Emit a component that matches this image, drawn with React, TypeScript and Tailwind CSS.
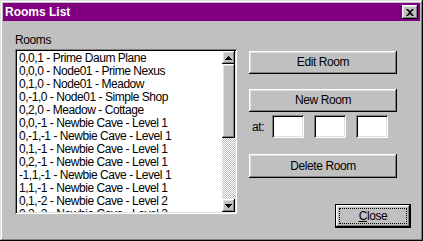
import React from 'react';

const rooms = [
  '0,0,1 - Prime Daum Plane',
  '0,0,0 - Node01 - Prime Nexus',
  '0,1,0 - Node01 - Meadow',
  '0,-1,0 - Node01 - Simple Shop',
  '0,2,0 - Meadow - Cottage',
  '0,0,-1 - Newbie Cave - Level 1',
  '0,-1,-1 - Newbie Cave - Level 1',
  '0,1,-1 - Newbie Cave - Level 1',
  '0,2,-1 - Newbie Cave - Level 1',
  '-1,1,-1 - Newbie Cave - Level 1',
  '1,1,-1 - Newbie Cave - Level 1',
  '0,1,-2 - Newbie Cave - Level 2',
  '0,2,-2 - Newbie Cave - Level 2',
];

const raised =
  'bg-[#c0c0c0] shadow-[inset_-1px_-1px_0_#000,inset_1px_1px_0_#fff,inset_-2px_-2px_0_#808080,inset_2px_2px_0_#dfdfdf]';
const sunken =
  'bg-white shadow-[inset_1px_1px_0_#808080,inset_-1px_-1px_0_#fff,inset_2px_2px_0_#000,inset_-2px_-2px_0_#dfdfdf]';

const Button: React.FC<{ label: React.ReactNode; className?: string }> = ({ label, className = '' }) => (
  <button className={`${raised} flex items-center justify-center text-[12px] leading-none tracking-[-0.4px] text-black ${className}`}>
    <span className="-mt-px">{label}</span>
  </button>
);

const Arrow: React.FC<{ down?: boolean }> = ({ down }) => (
  <div className={`${raised} w-[13px] h-[13px] flex items-center justify-center shrink-0`}>
    <svg width="7" height="4" viewBox="0 0 7 4" className={down ? 'rotate-180' : ''}>
      <path d="M3 0h1v1h1v1h1v1h1v1H0V3h1V2h1V1h1z" fill="#000" />
    </svg>
  </div>
);

export default function App() {
  return (
    <div
      className="w-[423px] h-[241px] bg-[#c0c0c0] p-[3px] flex flex-col shadow-[inset_-1px_-1px_0_#000,inset_1px_1px_0_#dfdfdf,inset_-2px_-2px_0_#808080,inset_2px_2px_0_#fff] select-none"
      style={{ fontFamily: '"Liberation Sans", Arial, sans-serif' }}
    >
      {/* Title bar */}
      <div className="h-[18px] bg-[#800080] flex items-center justify-between pl-[2px] pr-[2px]">
        <span className="text-white font-bold text-[12px] leading-none">Rooms List</span>
        <div className={`${raised} w-[16px] h-[14px] flex items-center justify-center`}>
          <svg width="8" height="7" viewBox="0 0 8 7">
            <path d="M0 0h2l2 2 2-2h2L5 3.5 8 7H6L4 5 2 7H0l3-3.5z" fill="#000" />
          </svg>
        </div>
      </div>

      <div className="flex flex-1">
        {/* Rooms list */}
        <div className="ml-[12px] w-[222px] flex flex-col">
          <div className="pt-[13px] pb-[3px] text-[12px] leading-[12px] tracking-[-0.4px] text-black">Rooms</div>
          <div className={`${sunken} h-[165px] p-[2px] flex`}>
            <div className="flex-1 overflow-hidden pl-[2px] pt-px">
              {rooms.map((r) => (
                <div key={r} className="text-[12px] leading-[13px] tracking-[-0.45px] text-black whitespace-nowrap">
                  {r}
                </div>
              ))}
            </div>
            <div className="w-[13px] flex flex-col">
              <Arrow />
              <div className={`${raised} h-[74px] shrink-0`} />
              <div className="flex-1 bg-[image:repeating-conic-gradient(#c0c0c0_0_25%,#fff_0_50%)] bg-[length:2px_2px]" />
              <Arrow down />
            </div>
          </div>
        </div>

        {/* Actions */}
        <div className="ml-[12px] flex-1 flex flex-col pr-[9px]">
          <Button label="Edit Room" className="w-[148px] h-[23px] mt-[30px]" />
          <Button label="New Room" className="w-[148px] h-[23px] mt-[15px]" />
          <div className="flex items-center mt-[3px] h-[23px]">
            <span className="text-[12px] text-black w-[23px] pl-[3px] tracking-[-0.4px]">at:</span>
            <div className="flex gap-[10px]">
              <div className={`${sunken} w-[32px] h-[23px]`} />
              <div className={`${sunken} w-[32px] h-[23px]`} />
              <div className={`${sunken} w-[32px] h-[23px]`} />
            </div>
          </div>
          <Button label="Delete Room" className="w-[148px] h-[24px] mt-[16px]" />
          <div className="mt-[26px] self-end w-[76px] h-[24px] bg-black p-px">
            <div className={`${raised} w-full h-full flex items-center justify-center p-[3px]`}>
              <div className="w-full h-full border border-dotted border-black flex items-center justify-center text-[12px] leading-none tracking-[-0.4px] text-black">
                <span><u>C</u>lose</span>
              </div>
            </div>
          </div>
        </div>
      </div>
    </div>
  );
}
